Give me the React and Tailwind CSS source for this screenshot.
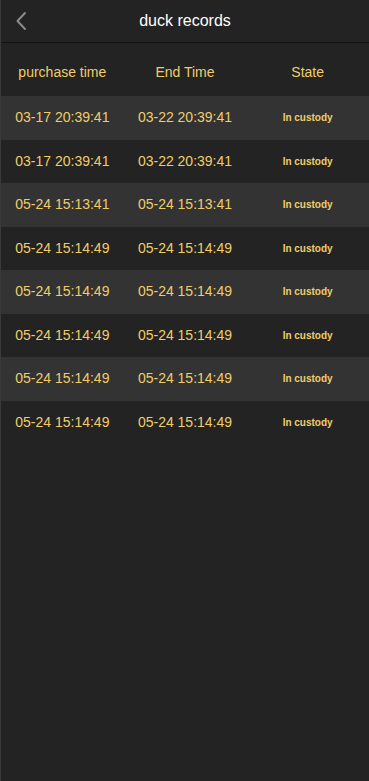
import React from 'react';

const rows = [
    ['03-17 20:39:41', '03-22 20:39:41'],
    ['03-17 20:39:41', '03-22 20:39:41'],
    ['05-24 15:13:41', '05-24 15:13:41'],
    ['05-24 15:14:49', '05-24 15:14:49'],
    ['05-24 15:14:49', '05-24 15:14:49'],
    ['05-24 15:14:49', '05-24 15:14:49'],
    ['05-24 15:14:49', '05-24 15:14:49'],
    ['05-24 15:14:49', '05-24 15:14:49'],
];

export default function App() {
    return (
        <div
            className="w-[369px] h-[781px] bg-[#232323] border-l border-[#3a3a3a] overflow-hidden"
            style={{ fontFamily: '"Liberation Sans", Arial, sans-serif' }}
        >
            {/* Top bar */}
            <div className="relative h-[43px] flex items-center justify-center border-b border-[#111111]">
                <button className="absolute left-[11px] top-[11px] w-[18px] h-[20px] flex items-center justify-center">
                    <svg width="12" height="20" viewBox="0 0 12 20" fill="none">
                        <path d="M10 2L2.5 10L10 18" stroke="#8a8a8a" strokeWidth="2" strokeLinecap="round" strokeLinejoin="round" />
                    </svg>
                </button>
                <h1 className="text-white text-[16px] leading-none -mt-[1px]">duck records</h1>
            </div>

            {/* Column headings */}
            <div className="grid grid-cols-3 h-[53px] pt-[5px] items-center text-[14px] text-[#f0cd6a]">
                <div className="text-center">purchase time</div>
                <div className="text-center">End Time</div>
                <div className="text-center">State</div>
            </div>

            {/* Records */}
            <div>
                {rows.map((r, i) => (
                    <div
                        key={i}
                        className={`grid grid-cols-3 h-[43.5px] items-center text-[#f0cd6a] ${i % 2 === 0 ? 'bg-[#333333]' : 'bg-[#232323]'}`}
                    >
                        <div className="text-center text-[14px]">{r[0]}</div>
                        <div className="text-center text-[14px]">{r[1]}</div>
                        <div className="text-center text-[10px] font-bold">In custody</div>
                    </div>
                ))}
            </div>
        </div>
    );
}
